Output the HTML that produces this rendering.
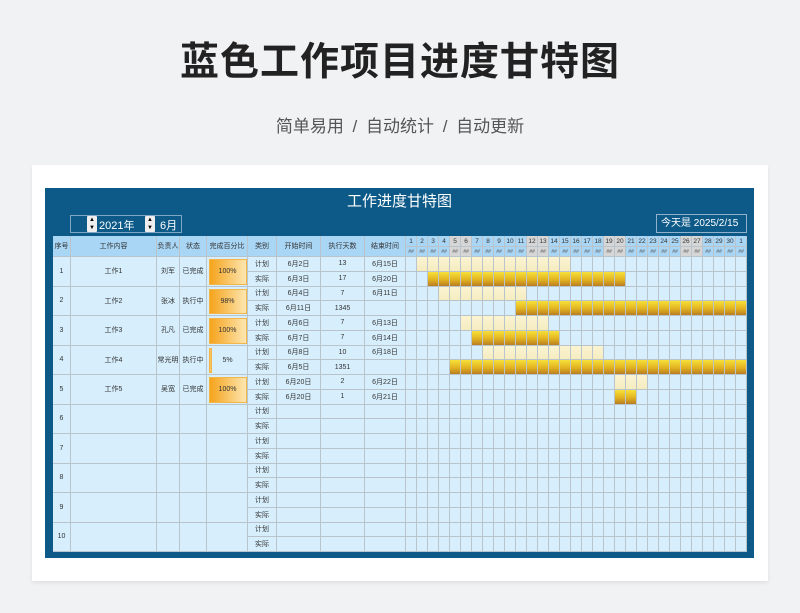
<!DOCTYPE html>
<html><head><meta charset="utf-8">
<style>
body{margin:0;width:800px;height:613px;background:#f1f2f4;font-family:"Liberation Sans","Noto Sans CJK SC",sans-serif;position:relative;overflow:hidden}
.a{position:absolute}
h1{position:absolute;left:0;width:800px;top:31px;margin:0;text-align:center;font-size:39px;font-weight:bold;color:#222;letter-spacing:1px}
.sub{position:absolute;left:0;width:800px;top:112px;text-align:center;font-size:17px;color:#555;word-spacing:4px}
.card{position:absolute;left:32px;top:165px;width:736px;height:416px;background:#fff;box-shadow:0 2px 4px rgba(0,0,0,.08)}
.frame{position:absolute;left:45px;top:188px;width:709px;height:370px;background:#0d5a88}
.c{position:absolute;box-sizing:border-box;border-right:1px solid #b9c3cc;border-bottom:1px solid #b9c3cc;font-size:7px;color:#333;display:flex;align-items:center;justify-content:center;white-space:nowrap;overflow:hidden}
</style></head><body>
<h1>蓝色工作项目进度甘特图</h1>
<div class="sub">简单易用 / 自动统计 / 自动更新</div>
<div class="card"></div>
<div class="frame"></div>
<div class="a" style="left:45px;top:190px;width:709px;text-align:center;font-size:15px;color:#fff">工作进度甘特图</div>
<div class="a" style="left:70px;top:215px;width:112px;height:18px;border:1px solid #7fa8c4;box-sizing:border-box"></div>
<div class="a" style="left:87px;top:216px;width:10px;height:16px;background:#eee;border-radius:1px;font-size:6px;line-height:8px;text-align:center;color:#000">▲<br>▼</div>
<div class="a" style="left:99px;top:217px;font-size:11px;color:#fff">2021年</div>
<div class="a" style="left:145px;top:216px;width:10px;height:16px;background:#eee;border-radius:1px;font-size:6px;line-height:8px;text-align:center;color:#000">▲<br>▼</div>
<div class="a" style="left:160px;top:217px;font-size:11px;color:#fff">6月</div>
<div class="a" style="left:656px;top:214px;width:91px;height:19px;border:1px solid #8fb3cc;box-sizing:border-box;font-size:10px;color:#fff;line-height:17px;padding-left:4px">今天是 2025/2/15</div>
<div id="t"></div>
<script>
var h='';
function c(x,y,w,hh,txt,st){h+='<div class="c" style="left:'+x+'px;top:'+y+'px;width:'+w+'px;height:'+hh+'px;'+(st||'')+'">'+(txt||'')+'</div>';}
var cols=[53,71,157,180,207,248,277,321,365,406];
var hd=['序号','工作内容','负责人','状态','完成百分比','类别','开始时间','执行天数','结束时间'];
var HB='background:#a9d6f5;';
for(var i=0;i<9;i++)c(cols[i],236,cols[i+1]-cols[i],21,hd[i],HB);
var we=[5,6,12,13,19,20,26,27];
for(var d=1;d<=31;d++){var x=406+(d-1)*11;var bg=we.indexOf(d)>=0?'background:#d6d6d6;':HB;
c(x,236,11,11,d==31?'1':d,bg+'font-size:6.5px');c(x,247,11,10,'##',bg+'font-size:5px;font-style:italic;color:#555');}
var rh=14.75,y0=257;
var data=[['1','工作1','刘军','已完成',100,['6月2日','13','6月15日'],['6月3日','17','6月20日'],[2,15],[3,20]],
['2','工作2','张冰','执行中',98,['6月4日','7','6月11日'],['6月11日','1345',''],[4,11],[11,31]],
['3','工作3','孔凡','已完成',100,['6月6日','7','6月13日'],['6月7日','7','6月14日'],[6,13],[7,14]],
['4','工作4','常光明','执行中',5,['6月8日','10','6月18日'],['6月5日','1351',''],[8,18],[5,31]],
['5','工作5','吴宽','已完成',100,['6月20日','2','6月22日'],['6月20日','1','6月21日'],[20,22],[20,21]]];
var B='background:#d7effd;';
for(var r=0;r<10;r++){var y=y0+r*2*rh;var D=data[r]||[String(r+1),'','','',null,['','',''],['','',''],null,null];
for(var i=0;i<5;i++)c(cols[i],y,cols[i+1]-cols[i],rh*2,i==4?'':D[i],B);
if(D[4]!=null){var pw=D[4]==5?3:38;
h+='<div class="a" style="left:208.5px;top:'+(y+2)+'px;width:'+pw+'px;height:'+(rh*2-4)+'px;background:linear-gradient(90deg,#f5a31c,#fde6b0);border:1px solid #f1b54a;box-sizing:border-box"></div>';
h+='<div class="a" style="left:207px;top:'+y+'px;width:41px;height:'+(rh*2)+'px;display:flex;align-items:center;justify-content:center;font-size:7px;color:#333">'+D[4]+'%</div>';}
for(var s=0;s<2;s++){var yy=y+s*rh;var v=s?D[6]:D[5];
c(248,yy,29,rh,s?'实际':'计划',B);for(var k=0;k<3;k++)c(cols[6+k],yy,cols[7+k]-cols[6+k],rh,v[k],B);
var sp=s?D[8]:D[7];
for(var d=1;d<=31;d++){var x=406+(d-1)*11;var st=B;
if(sp&&d>=sp[0]&&d<=sp[1])st=s?'background:linear-gradient(#f7e13a,#e2b320 55%,#b97d22);':'background:linear-gradient(#fbf4d2,#f5ecc0);';
c(x,yy,11,rh,'',st);}}}
document.getElementById('t').innerHTML=h;
</script>
</body></html>
